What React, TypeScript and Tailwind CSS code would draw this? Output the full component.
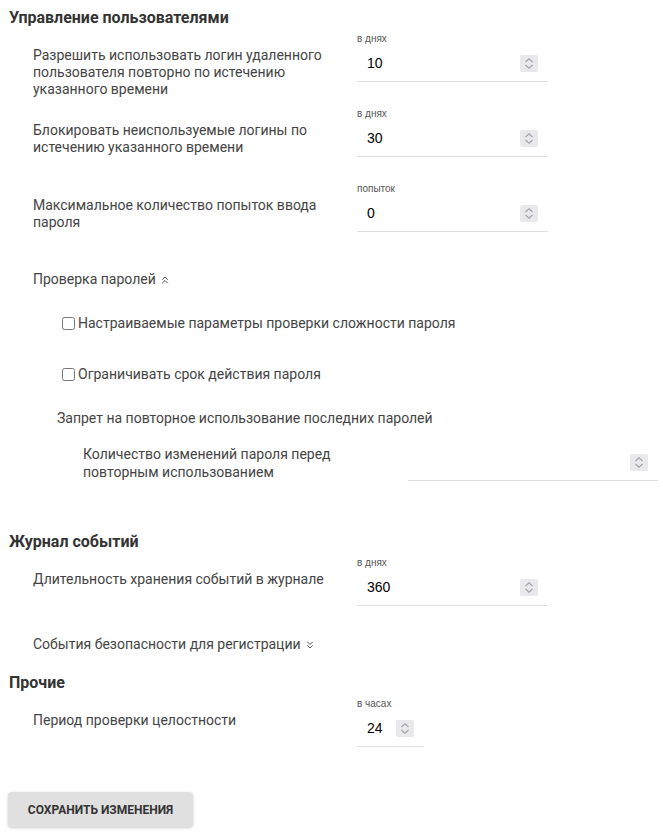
import { ChevronsUp, ChevronsDown } from 'lucide-react';

function Spinner() {
  return (
    <span className="flex h-[17px] w-[18px] shrink-0 items-center justify-center rounded-[2px] bg-[#e9e9ed]">
      <svg width="18" height="17" viewBox="0 0 18 17" fill="none" stroke="#a0a0a6" strokeWidth="1.1">
        <path d="M5.5 7 L9 3.8 L12.5 7" />
        <path d="M5.5 10 L9 13.2 L12.5 10" />
      </svg>
    </span>
  );
}

interface FieldProps {
  unit?: string;
  value: string;
  width: string;
}

function NumberField({ unit, value, width }: FieldProps) {
  return (
    <div className={`flex flex-col ${width}`}>
      {unit !== undefined && (
        <div className="h-[13px] text-[10px] leading-[12px] text-[#555] font-['Liberation_Sans',Arial,sans-serif]">{unit}</div>
      )}
      <div className="flex h-[36px] items-center justify-between border-b border-[#dedede] pl-[10px] pr-[10px]">
        <span className="text-[14px] text-black font-['Liberation_Sans',Arial,sans-serif]">{value}</span>
        <Spinner />
      </div>
    </div>
  );
}

function Row({ label, unit, value, width = 'w-[191px]' }: { label: string; unit: string; value: string; width?: string }) {
  return (
    <div className="flex h-[75px] items-start">
      <div className="ml-[24px] mt-[14px] w-[300px] text-[14px] leading-[17px] text-[#444]">{label}</div>
      <div className="ml-[24px]">
        <NumberField unit={unit} value={value} width={width} />
      </div>
    </div>
  );
}

export default function App() {
  return (
    <div className="min-h-[835px] w-[663px] bg-white pl-[9px] pt-[8px] font-['Roboto','Noto_Sans',sans-serif]">
      <h2 className="text-[16px] font-bold leading-[20px] text-[#333]">Управление пользователями</h2>
      <div className="mt-[5px]">
        <Row label="Разрешить использовать логин удаленного пользователя повторно по истечению указанного времени" unit="в днях" value="10" />
        <Row label="Блокировать неиспользуемые логины по истечению указанного времени" unit="в днях" value="30" />
        <Row label="Максимальное количество попыток ввода пароля" unit="попыток" value="0" />
      </div>

      <div className="mt-[13px] flex items-center pl-[24px] text-[14px] leading-[17px] text-[#444]">
        Проверка паролей
        <ChevronsUp size={12} strokeWidth={2} className="ml-[3px] text-[#555]" />
      </div>

      <label className="mt-[27px] flex items-center gap-[3px] pl-[53px] text-[14px] leading-[17px] text-[#444]">
        <input type="checkbox" className="m-0 h-[13px] w-[13px]" />
        Настраиваемые параметры проверки сложности пароля
      </label>
      <label className="mt-[34px] flex items-center gap-[3px] pl-[53px] text-[14px] leading-[17px] text-[#444]">
        <input type="checkbox" className="m-0 h-[13px] w-[13px]" />
        Ограничивать срок действия пароля
      </label>

      <div className="mt-[27px] pl-[48px] text-[14px] leading-[17px] text-[#444]">
        Запрет на повторное использование последних паролей
      </div>

      <div className="mt-[18px] flex items-start pl-[74px]">
        <div className="w-[300px] text-[14px] leading-[18px] text-[#444]">
          Количество изменений пароля перед повторным использованием
        </div>
        <div className="ml-[25px]">
          <NumberField value="" width="w-[250px]" />
        </div>
      </div>

      <h2 className="mt-[51px] text-[16px] font-bold leading-[20px] text-[#333]">Журнал событий</h2>
      <div className="mt-[5px]">
        <Row label="Длительность хранения событий в журнале" unit="в днях" value="360" />
      </div>
      <div className="mt-[4px] flex items-center pl-[24px] text-[14px] leading-[17px] text-[#444]">
        События безопасности для регистрации
        <ChevronsDown size={12} strokeWidth={2} className="ml-[3px] text-[#555]" />
      </div>

      <h2 className="mt-[20px] text-[16px] font-bold leading-[20px] text-[#333]">Прочие</h2>
      <div className="mt-[5px]">
        <Row label="Период проверки целостности" unit="в часах" value="24" width="w-[67px]" />
      </div>

      <button className="-ml-px mt-[19px] h-[35px] w-[185px] rounded-[4px] bg-[#e0e0e0] text-[12px] font-bold uppercase text-[#333] shadow-[0_1px_3px_rgba(0,0,0,0.2)]">
        Сохранить изменения
      </button>
    </div>
  );
}
